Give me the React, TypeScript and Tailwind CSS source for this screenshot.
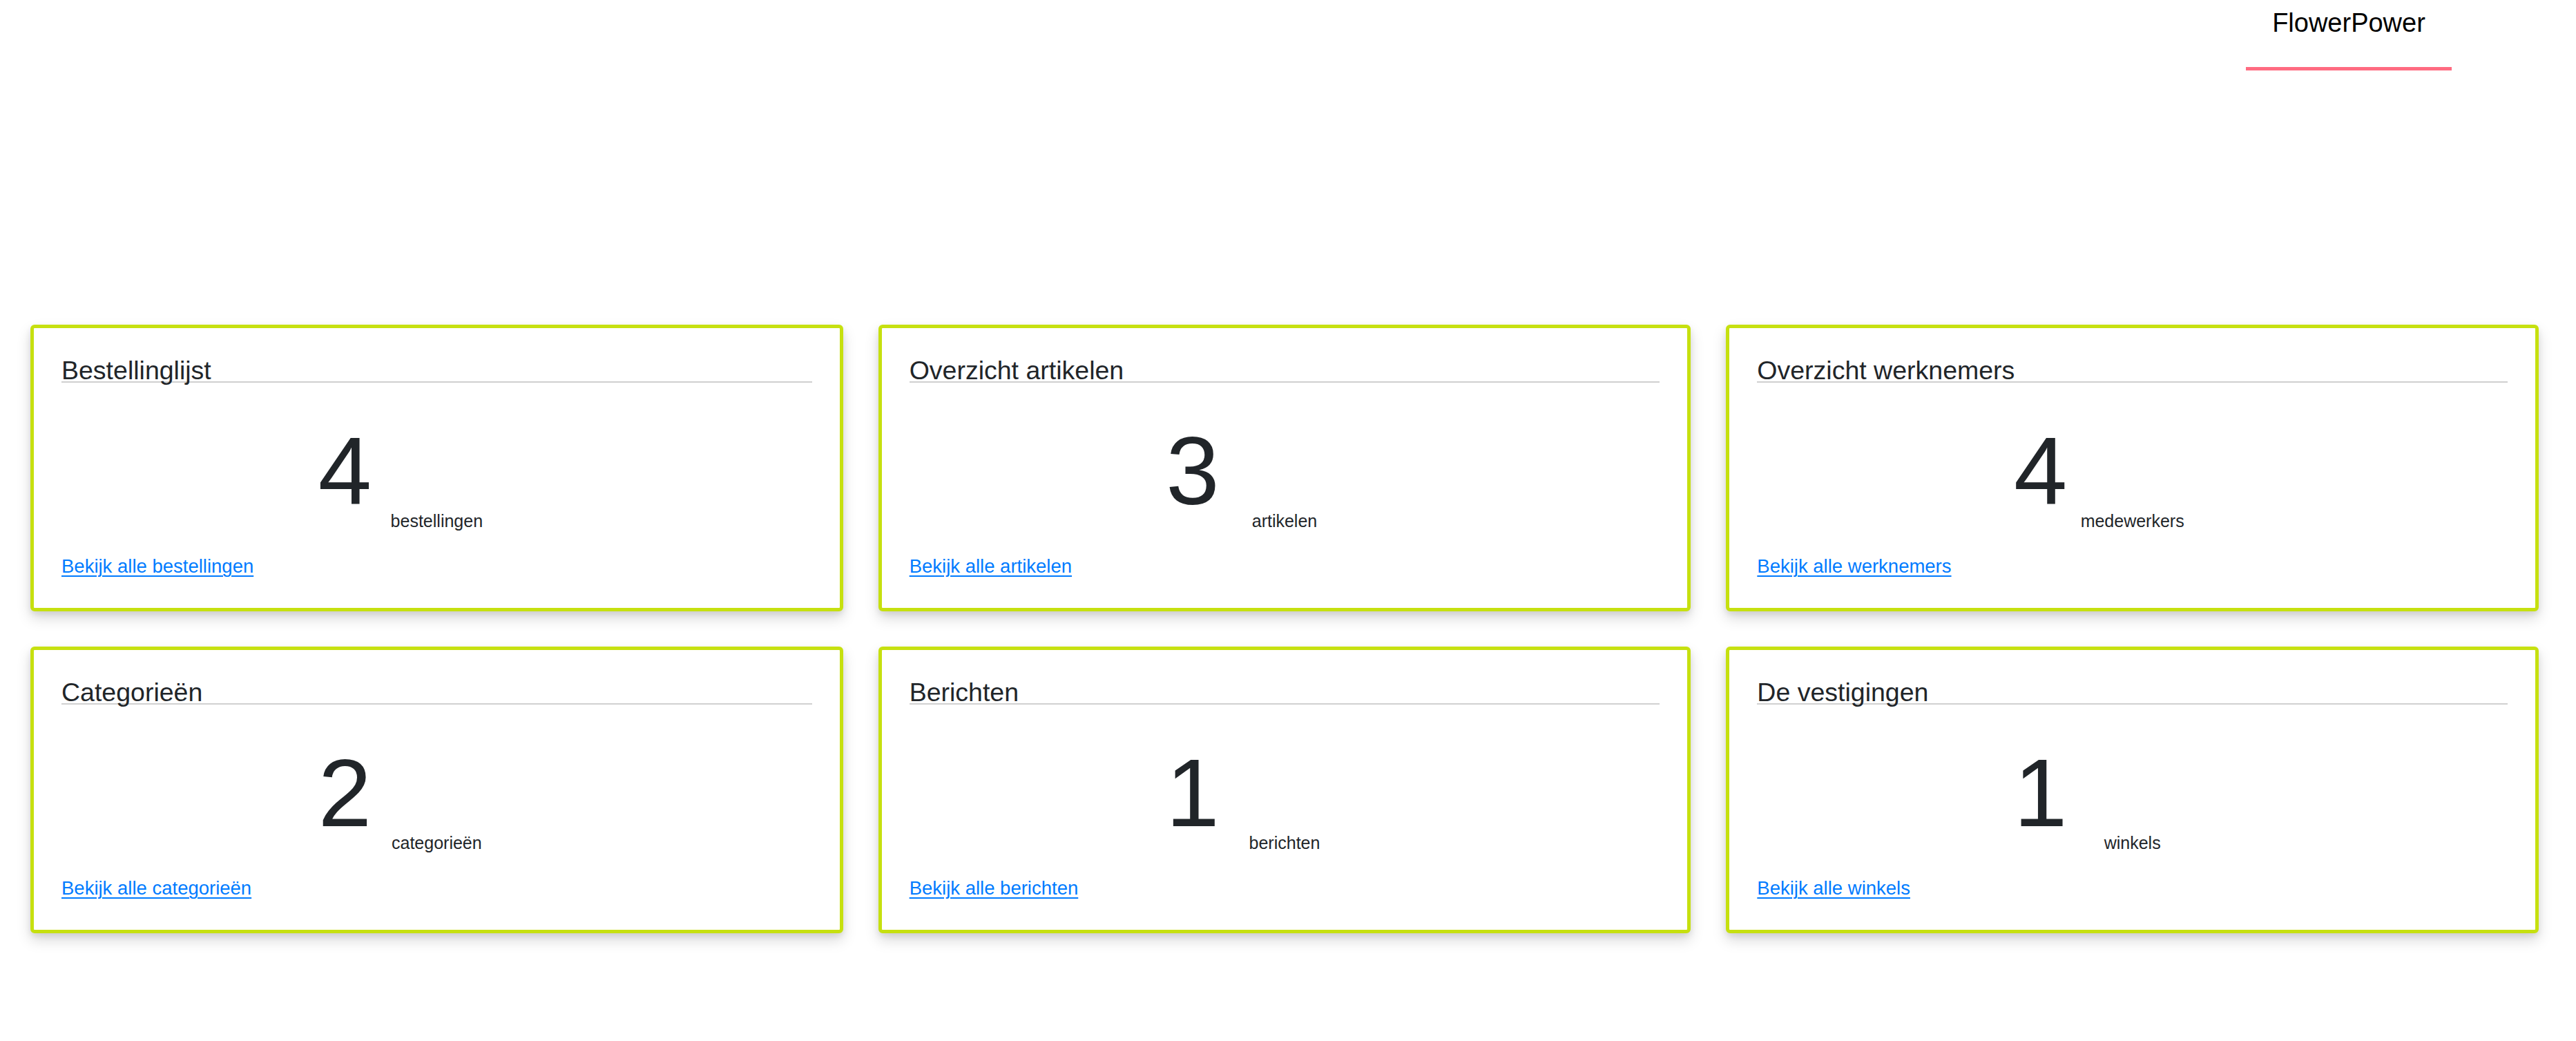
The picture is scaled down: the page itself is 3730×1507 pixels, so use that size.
const cards = [
  { title: "Bestellinglijst", count: 4, unit: "bestellingen", link: "Bekijk alle bestellingen" },
  { title: "Overzicht artikelen", count: 3, unit: "artikelen", link: "Bekijk alle artikelen" },
  { title: "Overzicht werknemers", count: 4, unit: "medewerkers", link: "Bekijk alle werknemers" },
  { title: "Categorieën", count: 2, unit: "categorieën", link: "Bekijk alle categorieën" },
  { title: "Berichten", count: 1, unit: "berichten", link: "Bekijk alle berichten" },
  { title: "De vestigingen", count: 1, unit: "winkels", link: "Bekijk alle winkels" },
];

const StatCard = ({ title, count, unit, link }: { title: string; count: number; unit: string; link: string }) => (
  <div className="rounded-[6px] border-[5px] border-[#c6e00f] bg-white px-[40px] pt-[45px] pb-[44px] shadow-[0_10px_20px_rgba(0,0,0,0.15),0_4px_8px_rgba(0,0,0,0.08)]">
    <h2 className="border-b-2 border-[#d0d0d0] text-[37.5px] leading-[32px] text-[#212529]">{title}</h2>
    <div className="mt-[58px] pr-[266px] text-center text-[139px] leading-none text-[#212529]">{count}</div>
    <div className="-mt-[9px] text-center text-[25px] leading-none text-[#212529]">{unit}</div>
    <a href="#" className="mt-[39px] inline-block text-[27.5px] leading-none text-[#007bff] underline decoration-2 underline-offset-[4px]">
      {link}
    </a>
  </div>
);

export default function App() {
  return (
    <div className="min-h-[1507px] bg-white font-['Liberation_Sans',Arial,sans-serif]">
      <header className="flex justify-end pr-[180px]">
        <nav className="w-[298px] border-b-[5px] border-[#ff6b81] pt-[5px] pb-[35px] text-center text-[38px] leading-[57px] text-black">
          FlowerPower
        </nav>
      </header>
      <main className="mt-[368px] grid grid-cols-3 gap-[51px] pl-[44px] pr-[54px]">
        {cards.map((card) => (
          <StatCard key={card.title} {...card} />
        ))}
      </main>
    </div>
  );
}
